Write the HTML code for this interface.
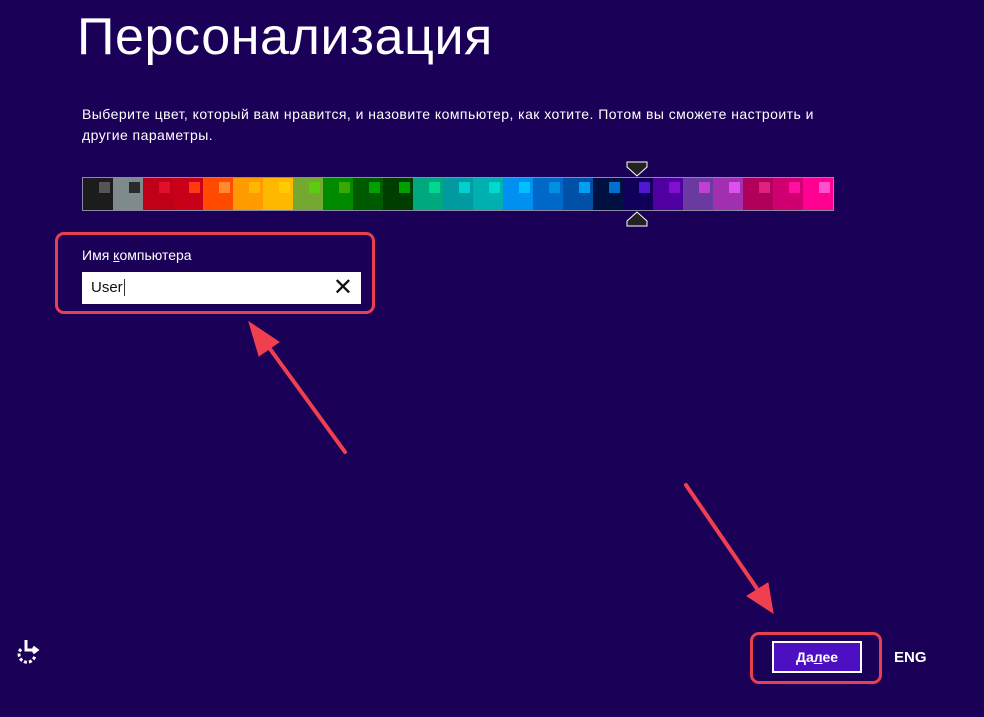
<!DOCTYPE html>
<html><head><meta charset="utf-8"><style>
body{margin:0;width:984px;height:717px;background:#1b0058;position:relative;overflow:hidden;font-family:"Liberation Sans","DejaVu Sans",sans-serif;color:#fff}
.t{position:absolute;left:77px;top:7px;font-size:52px;font-weight:300;letter-spacing:0.6px}
.d{position:absolute;left:82px;top:104px;font-size:14px;line-height:21px;width:800px;white-space:nowrap;letter-spacing:0.45px}
.bar{position:absolute;left:82px;top:177px;width:750px;height:32px;border:1px solid #8d8aa8;display:flex}
.bar div{flex:1;position:relative}
.bar div i{position:absolute;left:16px;top:4px;width:11px;height:11px}
.box{position:absolute;border:3px solid #e8404e;border-radius:9px}
.lbl{position:absolute;left:82px;top:247px;font-size:14px}
.inp{position:absolute;left:82px;top:272px;width:279px;height:32px;background:#fff;color:#111;font-size:15px}
.btn{position:absolute;left:772px;top:641px;width:86px;height:28px;border:2px solid #fff;background:#4d0fc2;font-weight:bold;font-size:14px;text-align:center;line-height:28px}
.eng{position:absolute;left:894px;top:649px;font-weight:bold;font-size:15px}
</style></head><body>
<div class="t">Персонализация</div>
<div class="d">Выберите цвет, который вам нравится, и назовите компьютер, как хотите. Потом вы сможете настроить и<br>другие параметры.</div>
<div class="bar">
<div style="background:#1c1c1c"><i style="background:#555"></i></div>
<div style="background:#7f8a8c"><i style="background:#2a2a2a"></i></div>
<div style="background:#c00018"><i style="background:#e0102a"></i></div>
<div style="background:#c8001a"><i style="background:#ff3a10"></i></div>
<div style="background:#ff4a00"><i style="background:#ff8a30"></i></div>
<div style="background:#ff9a00"><i style="background:#ffb800"></i></div>
<div style="background:#ffb800"><i style="background:#ffcc00"></i></div>
<div style="background:#74a830"><i style="background:#5ccc10"></i></div>
<div style="background:#008a00"><i style="background:#3aa800"></i></div>
<div style="background:#005a00"><i style="background:#00a000"></i></div>
<div style="background:#003e00"><i style="background:#00a000"></i></div>
<div style="background:#00a880"><i style="background:#00d890"></i></div>
<div style="background:#009aa0"><i style="background:#00d0d0"></i></div>
<div style="background:#00b0b0"><i style="background:#00d8d0"></i></div>
<div style="background:#0090f0"><i style="background:#00c0ff"></i></div>
<div style="background:#0068c8"><i style="background:#0090e0"></i></div>
<div style="background:#0050a8"><i style="background:#00a0f0"></i></div>
<div style="background:#001040"><i style="background:#0070d0"></i></div>
<div style="background:#10005a"><i style="background:#5018d0"></i></div>
<div style="background:#5000a0"><i style="background:#8010d0"></i></div>
<div style="background:#6a3aa0"><i style="background:#c040d0"></i></div>
<div style="background:#a030b0"><i style="background:#e050f0"></i></div>
<div style="background:#b0005a"><i style="background:#e02080"></i></div>
<div style="background:#d00070"><i style="background:#ff10a0"></i></div>
<div style="background:#ff0090"><i style="background:#ff50d0"></i></div>
</div>
<svg style="position:absolute;left:0;top:0" width="984" height="717">
<path d="M627 162h20v5l-10 9l-10-9z" fill="#222" stroke="#fff" stroke-width="1"/>
<path d="M627 226h20v-5l-10-9l-10 9z" fill="#222" stroke="#fff" stroke-width="1"/>
<g stroke="#f04050" stroke-width="4" fill="#f04050" stroke-linecap="round">
<line x1="345" y1="452" x2="265" y2="342"/>
<path d="M249 322l30 20l-20 14z" stroke-width="1"/>
<line x1="686" y1="485" x2="762" y2="596"/>
<path d="M773 613l-26-17l21-13z" stroke-width="1"/>
</g>
<g stroke="#fff" stroke-width="3" fill="none">
<path d="M21 649a8 8 0 1 0 14 6" stroke-dasharray="3 2"/>
<path d="M26 640v10h10"/>
<path d="M33 647l4 3l-4 3"/>
</g>
</svg>
<div class="box" style="left:55px;top:232px;width:314px;height:76px"></div>
<div class="lbl">Имя <u>к</u>омпьютера</div>
<div class="inp"><span style="position:absolute;left:9px;top:7px">User<span style="border-left:1px solid #333;margin-left:1px"></span></span><span style="position:absolute;right:8px;top:1px;font-size:24px">✕</span></div>
<div class="box" style="left:750px;top:632px;width:126px;height:46px"></div>
<div class="btn">Да<u>л</u>ее</div>
<div class="eng">ENG</div>
</body></html>
